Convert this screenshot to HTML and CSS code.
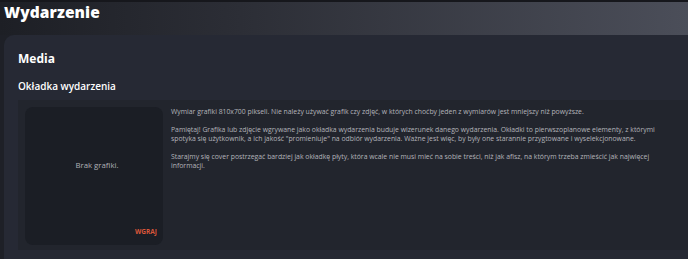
FILE: index.html
```html
<!DOCTYPE html>
<html lang="pl">
<head>
    <meta charset="UTF-8">
    <title>Wydarzenie</title>
    <link rel="stylesheet" href="styles.css">
</head>
<body>
<div class="topbar">
    <h1>Wydarzenie</h1>
</div>
<div class="card">
    <h2>Media</h2>
    <h3>Okładka wydarzenia</h3>
    <div class="section">
        <div class="cover">
            <span class="empty">Brak grafiki.</span>
            <a class="upload" href="#">WGRAJ</a>
        </div>
        <div class="info">
            <p>Wymiar grafiki 810x700 pikseli. Nie należy używać grafik czy zdjęć, w których choćby jeden z wymiarów jest mniejszy niż powyższe.</p>
            <p>Pamiętaj! Grafika lub zdjęcie wgrywane jako okładka wydarzenia buduje wizerunek danego wydarzenia. Okładki to pierwszoplanowe elementy, z którymi spotyka się użytkownik, a ich jakość "promieniuje" na odbiór wydarzenia. Ważne jest więc, by były one starannie przygtowane i wyselekcjonowane.</p>
            <p>Starajmy się cover postrzegać bardziej jak okładkę płyty, która wcale nie musi mieć na sobie treści, niż jak afisz, na którym trzeba zmieścić jak najwięcej informacji.</p>
        </div>
    </div>
</div>
</body>
</html>
```

FILE: styles.css
```css
body {
    margin: 0;
    background-color: #1e2027;
    font-family: "Open Sans", "Liberation Sans", sans-serif;
    color: #fff;
    overflow: hidden;
}

.topbar {
    height: 33px;
    border-top: 2px solid #16171c;
    background: linear-gradient(90deg, #1d1f25 0%, #2c2e36 35%, #4b4e59 100%);
}

.topbar h1 {
    margin: 0;
    padding-left: 4px;
    font-size: 15.5px;
    line-height: 20px;
    font-weight: 800;
    letter-spacing: 0.1px;
}

.card {
    margin-left: 4px;
    margin-right: -30px;
    padding: 14px 14px 0;
    background-color: #262934;
    border-radius: 10px 0 0 0;
    height: 210px;
    overflow: hidden;
}

.card h2 {
    margin: 0;
    padding-top: 2px;
    font-size: 12px;
    line-height: 15px;
    font-weight: 700;
}

.card h3 {
    margin: 13px 0 7px;
    font-size: 10px;
    line-height: 14px;
    font-weight: 600;
}

.section {
    display: flex;
    gap: 8px;
    padding: 7px;
    height: 136px;
    background-color: #22252d;
}

.cover {
    position: relative;
    width: 138px;
    height: 138px;
    flex-shrink: 0;
    box-sizing: border-box;
    padding: 0 0 22px 6px;
    display: flex;
    justify-content: center;
    align-items: center;
    background-color: #1b1e25;
    border-radius: 8px;
}

.empty {
    font-size: 7.8px;
    color: #b0b1b7;
}

.upload {
    position: absolute;
    right: 6px;
    bottom: 9px;
    font-size: 6.5px;
    font-weight: 700;
    color: #d9563a;
    text-decoration: none;
}

.info {
    width: 500px;
    font-size: 6.85px;
    line-height: 9px;
    color: #b3b4ba;
}

.info p {
    margin: 0 0 9px;
}
```
